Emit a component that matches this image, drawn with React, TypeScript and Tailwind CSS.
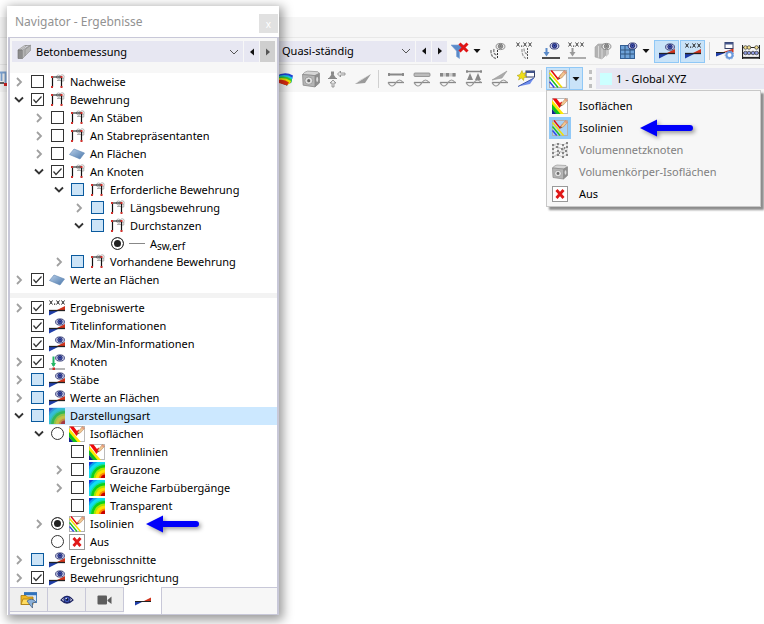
import { useState, type ReactNode } from 'react'
import clsx from 'clsx'

type IconProps = { className?: string }

function Svg({ children, className, size = 16 }: IconProps & { children: ReactNode; size?: number }) {
  return (
    <svg viewBox={`0 0 ${size} ${size}`} width={size} height={size} className={clsx('shrink-0', className)} aria-hidden="true">
      {children}
    </svg>
  )
}

/* ---------- small parts shared by several icons ---------- */

function EyeShape({ gray = false }: { gray?: boolean }) {
  const ring = gray ? '#777' : '#1b2262'
  return (
    <g>
      <ellipse cx="5" cy="3.5" rx="4.4" ry="3.1" fill={gray ? '#eee' : '#c9cdec'} stroke={ring} strokeWidth="0.8" />
      <circle cx="5" cy="3.3" r="2.2" fill={gray ? '#999' : '#4a5ec4'} stroke={ring} strokeWidth="0.9" />
      <circle cx="5" cy="3.2" r="0.9" fill={ring} />
    </g>
  )
}

function WedgeShape() {
  return (
    <g>
      <path d="M0 10.5 H10 L0 15.5 Z" fill="#1f3ea8" />
      <path d="M16 6 V11 H6 Z" fill="#d0341c" />
      <path d="M0 10.5 H16" stroke="#222" strokeWidth="1.3" />
    </g>
  )
}

function DotsShape({ color = '#222' }: { color?: string }) {
  return (
    <g stroke={color} strokeWidth="1" fill="none">
      <path d="M0.5 0.5 L3.5 4.5 M3.5 0.5 L0.5 4.5 M7.5 0.5 L10.5 4.5 M10.5 0.5 L7.5 4.5 M12.5 0.5 L15.5 4.5 M15.5 0.5 L12.5 4.5" />
      <path d="M5 4.2 H6.2" strokeWidth="1.3" />
    </g>
  )
}

function PencilShape() {
  return (
    <g>
      <path d="M8.5 8 L9.3 5.5 L13.5 0.5 L15.6 2.2 L11.2 7.1 Z" fill="#f3c791" stroke="#a97a4c" strokeWidth="0.5" />
      <path d="M12.4 1.8 L13.5 0.5 L15.6 2.2 L14.5 3.5 Z" fill="#e59a80" />
      <path d="M8.500 8 L8.900 6.700 L9.900 7.500 Z" fill="#222" />
    </g>
  )
}

/* ---------- tree icons ---------- */

function FrameIcon() {
  return (
    <Svg>
      <g fill="none" stroke="#a8a8a8" strokeWidth="0.9">
        <circle cx="9.5" cy="3" r="2" />
        <circle cx="13.2" cy="2.8" r="2" />
        <path d="M8 6.5 H12.5 M14.8 4 V7 H12.5 M10 6.5 V2" />
      </g>
      <path d="M3 3 H13 M3.5 3 V13 M12.5 3 V13" fill="none" stroke="#111" strokeWidth="1.2" />
      <path d="M2 2h2v2h-2zM11.5 2h2v2h-2zM2 12h2v2h-2zM11.5 12h2v2h-2z" fill="#d0302c" />
    </Svg>
  )
}

function SurfaceIcon() {
  return (
    <Svg>
      <defs>
        <linearGradient id="surface" x1="0" y1="0" x2="1" y2="1">
          <stop offset="0" stopColor="#b9cfe8" />
          <stop offset="1" stopColor="#4a77ab" />
        </linearGradient>
      </defs>
      <path d="M5 3 L15.5 7 L11 13 L0.5 8.5 Z" fill="url(#surface)" stroke="#5f86b3" strokeWidth="0.6" />
    </Svg>
  )
}

function LineIcon() {
  return (
    <Svg>
      <path d="M0 7.5 H16" stroke="#888" />
    </Svg>
  )
}

function ValuesIcon() {
  return (
    <Svg>
      <DotsShape />
      <WedgeShape />
    </Svg>
  )
}

function ResultEyeIcon() {
  return (
    <Svg>
      <WedgeShape />
      <g transform="translate(6 0.5)">
        <EyeShape />
      </g>
    </Svg>
  )
}

function NodeEyeIcon() {
  return (
    <Svg>
      <path d="M0 15 H16" stroke="#999" strokeWidth="1.4" />
      <path d="M4.5 2.5 V12" stroke="#22b765" strokeWidth="2" />
      <path d="M2 9 H7 L4.5 13 Z" fill="#22b765" />
      <rect x="3.5" y="13.5" width="2.5" height="2.5" fill="#c9302c" />
      <g transform="translate(6 0.5)">
        <EyeShape />
      </g>
    </Svg>
  )
}

function GradientIcon({ dim = false }: { dim?: boolean }) {
  return (
    <Svg>
      <rect width="16" height="16" fill="#1238d8" />
      <circle cx="16" cy="17" r="20.500" fill="#0a9cf0" />
      <circle cx="16" cy="17" r="18.500" fill="#10dcf5" />
      <circle cx="16" cy="17" r="15.500" fill="#10e0a0" />
      <circle cx="16" cy="17" r="14" fill="#10d01c" />
      <circle cx="16" cy="17" r="11.500" fill="#a8e800" />
      <circle cx="16" cy="17" r="9.500" fill="#ffe000" />
      <circle cx="16" cy="17" r="6.500" fill="#ff8a00" />
      <circle cx="16" cy="17" r="4.500" fill="#c80000" />
      {dim && <rect width="16" height="16" fill="#6b8fae" opacity="0.4" />}
    </Svg>
  )
}

function IsoAreasIcon() {
  return (
    <Svg>
      <rect x="0.5" y="0.5" width="15" height="15" fill="#fff" stroke="#bbb" />
      <path d="M0 2 L12 16 H8 L0 6.500 Z" fill="#ffe600" />
      <path d="M0 6 L8.500 16 H4 L0 11 Z" fill="#10c01c" />
      <path d="M0 11 L4.200 16 H0 Z" fill="#10248c" />
      <path d="M0.500 0.500 H4.500 L8 5 L9.500 3.500 L10.500 6 L7.500 10 Z" fill="#ee0a0a" />
      <PencilShape />
    </Svg>
  )
}

function IsoLinesIcon({ active = false, size = 16 }: { active?: boolean; size?: number }) {
  return (
    <svg viewBox="0 0 16 16" width={size} height={size} className="shrink-0" aria-hidden="true">
      <rect x="0.5" y="0.5" width="15" height="15" fill={active ? '#a9d1f5' : '#fff'} stroke="#b0b0b0" />
      <path d="M2 0.500 L8 8 L11 4.500" fill="none" stroke="#e00d0d" strokeWidth="1.400" />
      <path d="M0.500 2.500 L11.500 15.500" stroke="#f2e000" strokeWidth="1.500" />
      <path d="M0.500 6.500 L8 15.500" stroke="#18c01c" strokeWidth="1.300" />
      <path d="M0.500 10.500 L4.700 15.500" stroke="#2b45e8" strokeWidth="1.300" />
      <PencilShape />
    </svg>
  )
}

function OffIcon() {
  return (
    <Svg>
      <rect x="0.5" y="0.5" width="15" height="15" fill="#fff" stroke="#999" />
      <path d="M4.500 4 L11.500 12 M11.500 4 L4.500 12" stroke="#e01818" strokeWidth="2.800" />
    </Svg>
  )
}

function MeshNodesIcon() {
  return (
    <Svg>
      <path
        d="M1 3 L6 1.500 L11 3 L15 1 M1 7 L5 5 L10 7 L15 5 M1 11 L6 9 L11 11 L15 9 M1 15 L6 13 L11 15 L15 12 M1 3 V15 M6 1.500 V13 M11 3 V15 M15 1 V12 M1 3 L15 9 M1 15 L15 5"
        fill="none"
        stroke="#b5b5b5"
        strokeWidth="0.7"
      />
      <path
        d="M0 2h2v2h-2zM5 1h2v2h-2zM10 2h2v2h-2zM14 0h2v2h-2zM0 6h2v2h-2zM4 4h2v2h-2zM9 6h2v2h-2zM14 4h2v2h-2zM0 10h2v2h-2zM5 8h2v2h-2zM10 10h2v2h-2zM13 8h2v2h-2zM0 14h2v2h-2zM5 12h2v2h-2zM10 14h2v2h-2zM14 12h2v2h-2zM7 10h1v2h-1zM12 5h1v2h-1z"
        fill="#858585"
      />
    </Svg>
  )
}

function SolidIcon({ size = 16 }: { size?: number }) {
  return (
    <svg viewBox="0 0 16 16" width={size} height={size} className="shrink-0" aria-hidden="true">
      <path d="M0.500 4 Q2 1.500 5 1 L14 1.500 L15.500 3 L11.500 5 Z" fill="#d6d6d6" stroke="#999" strokeWidth="0.7" />
      <path d="M11.500 5 L15.500 3 V11.500 L11.500 15 Z" fill="#8f8f8f" stroke="#888" strokeWidth="0.7" />
      <path d="M0.500 4 L11.500 5 V15 L1 13.500 Z" fill="#b5b5b5" stroke="#888" strokeWidth="0.7" />
      <ellipse cx="6" cy="9.500" rx="3.500" ry="3.300" fill="#e2e2e2" stroke="#999" strokeWidth="0.8" />
      <circle cx="6" cy="9.500" r="1.400" fill="#6d6d6d" />
      <ellipse cx="13.500" cy="8.500" rx="0.9" ry="2.200" fill="#ddd" />
    </svg>
  )
}

function BeamIcon() {
  return (
    <Svg>
      <path d="M2 6 L8.500 1.500 H11 L5 6 Z" fill="#c9c9c9" stroke="#8d8d8d" strokeWidth="0.6" />
      <path d="M2 6 H6.500 V14.500 H2 Z" fill="#8d8d8d" stroke="#6d6d6d" strokeWidth="0.6" />
      <path d="M6.500 6 L14.500 1 V6.500 L6.500 14.500 Z" fill="#b5b5b5" stroke="#8d8d8d" strokeWidth="0.6" />
      <path d="M9 1.500 H14.500 L9 5.500 V12" fill="none" stroke="#909090" strokeWidth="0.8" />
    </Svg>
  )
}

/* ---------- toolbar icons, 18px ---------- */

function FilterOffIcon() {
  return (
    <Svg size={18}>
      <path d="M0 3 H13 L8.500 9 V16.500 L5.500 14.500 V9 Z" fill="#5b8bc9" stroke="#7ea5d6" strokeWidth="0.6" />
      <path d="M8.500 1.500 L16.500 9.500 M16.500 1.500 L8.500 9.500" stroke="#e01414" strokeWidth="3" />
    </Svg>
  )
}

function StirrupEyeIcon() {
  return (
    <Svg size={18}>
      <path d="M1 8 Q0.500 15 6 16.500 M4 7 Q3 12 6.500 13" fill="none" stroke="#777" strokeWidth="1.300" strokeDasharray="3 1" />
      <path d="M7.500 5 V17" stroke="#333" strokeDasharray="2 1" />
      <g transform="translate(5.500 1)"><EyeShape gray /></g>
    </Svg>
  )
}

function StirrupValueIcon() {
  return (
    <Svg size={18}>
      <DotsShape color="#444" />
      <path d="M6 7 Q5.500 14 10 16.500 M8 6.500 Q8 11 11 12" fill="none" stroke="#999" strokeWidth="1.200" strokeDasharray="3 1" />
      <path d="M11.500 6 V17" stroke="#555" strokeDasharray="2 1" />
    </Svg>
  )
}

function LoadIcon({ gray = false }: { gray?: boolean }) {
  return (
    <Svg size={18}>
      {gray ? <DotsShape color="#444" /> : <g transform="translate(7.500 0.500)"><EyeShape /></g>}
      <path d="M4.500 6 V11" stroke={gray ? '#999' : '#5b8bc9'} strokeWidth="2" />
      <path d="M1.500 10 H7.500 L4.500 14.500 Z" fill={gray ? '#999' : '#5b8bc9'} />
      <path d="M0 16 H18" stroke={gray ? '#999' : '#222'} strokeWidth="1.600" />
    </Svg>
  )
}

function BoxEyeIcon() {
  return (
    <Svg size={18}>
      <path d="M1 5 L4 2 H12 V13 L8 17 L1 15 Z" fill="#b2b2b2" stroke="#a5a5a5" strokeWidth="0.6" />
      <path d="M4.500 4 V15.500 M8 6 V17" stroke="#d8d8d8" />
      <path d="M12 5 L15 4 V12 L12 15 Z" fill="#cacaca" />
      <g transform="translate(7.500 1)"><EyeShape gray /></g>
    </Svg>
  )
}

function GridEyeIcon() {
  return (
    <Svg size={18}>
      <rect x="0.5" y="3.500" width="14" height="13" fill="#6ea2d8" stroke="#335f95" />
      <path d="M5 4 V16 M10 4 V16 M1 8 H14 M1 12 H14" stroke="#31547d" />
      <g transform="translate(7.500 0.500)"><EyeShape /></g>
    </Svg>
  )
}

function ResultSettingsIcon() {
  return (
    <Svg size={18}>
      <rect x="9" y="0.500" width="8" height="6" fill="#fff" stroke="#333f66" />
      <path d="M9 1.500 H17" stroke="#44568c" strokeWidth="2" />
      <path d="M0 11 H9 L0 14.500 Z" fill="#1f3ea8" />
      <path d="M17.500 6.500 V10.500 H6 Z" fill="#d0341c" />
      <path d="M0 10.500 H9" stroke="#222" />
      <circle cx="13.500" cy="13" r="3" fill="#fff" stroke="#6d9bdd" strokeWidth="2" />
      <circle cx="13.500" cy="13" r="4.300" fill="none" stroke="#6d9bdd" strokeDasharray="1.500 1.500" />
    </Svg>
  )
}

function AbacusIcon() {
  return (
    <Svg size={18}>
      <path d="M0.500 3 V17 M17.500 3 V17 M0 5.500 H18 M0 11 H18" stroke="#222" strokeWidth="1.200" />
      <path d="M0 15.800 H18" stroke="#222" strokeWidth="1.800" />
      <g stroke="#333" strokeWidth="0.7">
        <g fill="#f3df90">
          <circle cx="3.500" cy="5.500" r="1.800" /><circle cx="7" cy="5.500" r="1.800" /><circle cx="14.500" cy="5.500" r="1.800" />
        </g>
        <g fill="#8f9be0">
          <circle cx="3.500" cy="11" r="1.800" /><circle cx="7" cy="11" r="1.800" /><circle cx="11" cy="11" r="1.800" /><circle cx="14.500" cy="11" r="1.800" />
        </g>
      </g>
    </Svg>
  )
}

function RainbowIcon() {
  return (
    <Svg size={18}>
      <path d="M0 6 Q9 1 17 5.500 L15 13 Q12 13 11 15.500 L0 11 Z" fill="#2143d8" />
      <path d="M0 7 Q9 3 16.500 7.500 L15 13 Q12 12.500 11 15.500 L0 11 Z" fill="#19c7e5" />
      <path d="M0 8 Q9 4.500 16 9.500 L15 13 Q12 12 11 15.500 L0 11 Z" fill="#38cf30" />
      <path d="M0 9 Q8 6.500 15 11 L14 13.500 L11 15 L0 11 Z" fill="#f6e400" />
      <path d="M0 10.500 Q8 8.500 13 12.500 L11 15.500 L3 13 Z" fill="#e52c12" />
    </Svg>
  )
}

function SupportIcon() {
  return (
    <Svg size={18}>
      <path d="M1 8 L4.500 3 L8 8 Z M3 1.500 h3 v3 h-3 z" fill="#8b8b8b" />
      <path d="M0 8.500 H9" stroke="#888" />
      <path d="M9.500 4 L12.500 1 V3 H17 V5 H12.500 V7 Z" fill="#e5e5e5" stroke="#888" strokeWidth="0.8" />
      <path d="M5 10 L8 13 H6 V17 H4 V13 H2 Z" fill="#e5e5e5" stroke="#888" strokeWidth="0.8" />
    </Svg>
  )
}

function GrayWedgeIcon() {
  return (
    <Svg size={18}>
      <path d="M1 14 L17 4 L11 13 Z" fill="#9b9b9b" />
      <path d="M1 14 L17 4 L6 10 Z" fill="#cecece" />
    </Svg>
  )
}

function DiagramIcon({ variant }: { variant: 'line' | 'bar' | 'dots' | 'frame' | 'wedge' }) {
  return (
    <Svg size={18}>
      {variant === 'line' && <path d="M1 4.500 H17 M2 3 V6 M16 3 V6" stroke="#888" strokeWidth="1.800" />}
      {variant === 'bar' && <rect x="1" y="3" width="16" height="3.500" rx="1" fill="#bcbcbc" stroke="#888" strokeWidth="0.8" />}
      {variant === 'dots' && (
        <>
          <rect x="1" y="3" width="16" height="3.500" rx="1" fill="#ccc" />
          <path d="M1 3h3v3.500h-3zM7 3h3v3.500h-3zM13.500 3h3v3.500h-3z" fill="#888" />
        </>
      )}
      {variant === 'frame' && (
        <>
          <path d="M1 1.500 H17 M2 0 V3 M16 0 V3" stroke="#888" strokeWidth="1.300" />
          <path d="M5 3 L8 10 H2 Z M13 3 L16 10 H10 Z" fill="#888" />
        </>
      )}
      {variant === 'wedge' && <path d="M1 10 L16 1 L11 8 Z" fill="#aaa" stroke="#999" strokeWidth="0.6" />}
      <path d="M1 12.500 H17" stroke="#888" strokeWidth="1.300" />
      <path d="M1 12.500 Q5 19.500 9 12.500 Q12.500 7.500 16 12.500" fill="none" stroke="#999" strokeWidth="1.200" />
    </Svg>
  )
}

function NewResultIcon() {
  return (
    <Svg size={18}>
      <rect x="9" y="1" width="8.500" height="6" fill="#fff" stroke="#333f66" />
      <path d="M9 2 H17.500" stroke="#44568c" strokeWidth="2" />
      <path d="M5 0.500 L6 3.500 L9 2.500 L7.500 5.500 L10 7 L7 7.500 L6.500 10.500 L4.500 8 L1.500 10 L2.500 7 L0 5.500 L3 4.500 Z" fill="#f0df15" stroke="#a99a10" strokeWidth="0.5" />
      <path d="M1 16.500 L17 8 L13 14 Z" fill="#6e8dec" />
      <path d="M1 16.500 L17 8" stroke="#3c55ad" />
    </Svg>
  )
}

function ModelIcon() {
  return (
    <svg viewBox="10 0 8 16" width="8" height="16" className="shrink-0" aria-hidden="true">
      <path d="M9 1.500 H15.500 V12 M11.500 2 V10" fill="none" stroke="#7ea5d6" strokeWidth="1.800" />
      <path d="M10 12 H14" stroke="#333" strokeWidth="1.500" />
      <rect x="14" y="12" width="3" height="3" fill="#d22" />
    </svg>
  )
}

/* ---------- tab icons ---------- */

function ProjectTabIcon() {
  return (
    <Svg size={18}>
      <rect x="4.500" y="1.500" width="12" height="10" fill="#dce8f5" stroke="#4d82bd" />
      <path d="M4 3 H17" stroke="#2f72bd" strokeWidth="2.500" />
      <path d="M1 4.500 H6 L7.500 6 H13 V13.500 H1 Z" fill="#f1b820" stroke="#a97a10" strokeWidth="0.8" />
      <path d="M3 8 H13 L11 13.500 H1 Z" fill="#ffdc60" stroke="#a97a10" strokeWidth="0.8" />
      <path d="M7 10 Q12 6 16 11 L12.500 12 V17 L10 14 Z" fill="#8bb0d8" stroke="#41597a" strokeWidth="0.7" />
    </Svg>
  )
}

function EyeTabIcon() {
  return (
    <Svg>
      <path d="M2 8 Q8 0.500 14 8 Q8 14 2 8 Z" fill="#fff" stroke="#1b2262" strokeWidth="1.200" />
      <circle cx="8" cy="7.500" r="3.200" fill="#4259bd" stroke="#1b2262" />
      <circle cx="8" cy="7.500" r="1.300" fill="#0b1030" />
      <circle cx="7.200" cy="6.500" r="0.7" fill="#fff" />
    </Svg>
  )
}

function CameraTabIcon() {
  return (
    <Svg>
      <rect x="0.5" y="3.5" width="9.500" height="9" rx="1" fill="#5d5d5d" />
      <path d="M10.500 8 L14.500 4.500 V12 L10.500 9 Z" fill="#5d5d5d" />
    </Svg>
  )
}

function ResultTabIcon() {
  return (
    <Svg>
      <path d="M0 8 H9 L0 12.500 Z" fill="#1f3ea8" />
      <path d="M16 4.500 V9 H7 Z" fill="#d0341c" />
      <path d="M0 8.500 H16" stroke="#222" />
    </Svg>
  )
}

/* ---------- controls ---------- */

function Chevron({ open = false }: { open?: boolean }) {
  return (
    <svg viewBox="0 0 10 10" width="10" height="10" aria-hidden="true">
      {open ? (
        <path d="M1 2.500 L5 6.500 L9 2.500" fill="none" stroke="#333" strokeWidth="1.800" />
      ) : (
        <path d="M3 1 L7 5 L3 9" fill="none" stroke="#a0a0a0" strokeWidth="1.800" />
      )}
    </svg>
  )
}

function Triangle({ dir, muted = false }: { dir: 'left' | 'right' | 'down'; muted?: boolean }) {
  const d = { left: 'M6 0.500 V7.500 L2 4 Z', right: 'M2 0.500 V7.500 L6 4 Z', down: 'M0.500 2 H7.500 L4 6 Z' }[dir]
  return (
    <svg viewBox="0 0 8 8" width="8" height="8" className="shrink-0" aria-hidden="true">
      <path d={d} fill={muted ? '#555' : '#111'} />
    </svg>
  )
}

function Combo({ label, value, icon, className }: { label: string; value: string; icon?: ReactNode; className?: string }) {
  return (
    <div className={clsx('flex min-w-0 items-center bg-[#e7e7f2]', className)}>
      {icon}
      <select aria-label={label} className="h-full min-w-0 flex-1 appearance-none bg-transparent text-[11px] outline-none">
        <option>{value}</option>
      </select>
      <svg viewBox="0 0 10 10" width="10" height="10" className="mr-1 shrink-0" aria-hidden="true">
        <path d="M1 3 L5 7 L9 3" fill="none" stroke="#555" />
      </svg>
    </div>
  )
}

function BlueArrow({ className }: IconProps) {
  return (
    <svg viewBox="0 0 56 22" width="56" height="22" className={clsx('shrink-0 drop-shadow-[2px_2px_2px_rgba(0,0,0,0.4)]', className)} aria-hidden="true">
      <path d="M1 11 L18 2.500 V8 H51 Q54 8 54 11 Q54 14 51 14 H18 V19.500 Z" fill="#0000fa" />
    </svg>
  )
}

type CheckState = 'on' | 'off' | 'partial'

type TreeItem = {
  id: string
  label: ReactNode
  level: number
  expand?: 'open' | 'closed'
  control: 'check' | 'radio'
  state: CheckState
  icon: ReactNode
  group?: string
  selected?: boolean
  marked?: boolean
}

const RESULT_ITEMS: TreeItem[] = [
  { id: 'nachweise', label: 'Nachweise', level: 0, expand: 'closed', control: 'check', state: 'off', icon: <FrameIcon /> },
  { id: 'bewehrung', label: 'Bewehrung', level: 0, expand: 'open', control: 'check', state: 'on', icon: <FrameIcon /> },
  { id: 'an-staeben', label: 'An Stäben', level: 1, expand: 'closed', control: 'check', state: 'off', icon: <FrameIcon /> },
  { id: 'an-stabrep', label: 'An Stabrepräsentanten', level: 1, expand: 'closed', control: 'check', state: 'off', icon: <FrameIcon /> },
  { id: 'an-flaechen', label: 'An Flächen', level: 1, expand: 'closed', control: 'check', state: 'off', icon: <SurfaceIcon /> },
  { id: 'an-knoten', label: 'An Knoten', level: 1, expand: 'open', control: 'check', state: 'on', icon: <FrameIcon /> },
  { id: 'erforderlich', label: 'Erforderliche Bewehrung', level: 2, expand: 'open', control: 'check', state: 'partial', icon: <FrameIcon /> },
  { id: 'laengs', label: 'Längsbewehrung', level: 3, expand: 'closed', control: 'check', state: 'partial', icon: <FrameIcon /> },
  { id: 'durchstanzen', label: 'Durchstanzen', level: 3, expand: 'open', control: 'check', state: 'partial', icon: <FrameIcon /> },
  {
    id: 'asw-erf',
    label: (
      <>
        A<span className="align-[-2px] text-[10px] leading-none">sw,erf</span>
      </>
    ),
    level: 4,
    control: 'radio',
    state: 'on',
    group: 'durchstanzen',
    icon: <LineIcon />,
  },
  { id: 'vorhanden', label: 'Vorhandene Bewehrung', level: 2, expand: 'closed', control: 'check', state: 'partial', icon: <FrameIcon /> },
  { id: 'werte-flaechen', label: 'Werte an Flächen', level: 0, expand: 'closed', control: 'check', state: 'on', icon: <SurfaceIcon /> },
]

const DISPLAY_ITEMS: TreeItem[] = [
  { id: 'ergebniswerte', label: 'Ergebniswerte', level: 0, expand: 'closed', control: 'check', state: 'on', icon: <ValuesIcon /> },
  { id: 'titel', label: 'Titelinformationen', level: 0, control: 'check', state: 'on', icon: <ResultEyeIcon /> },
  { id: 'maxmin', label: 'Max/Min-Informationen', level: 0, control: 'check', state: 'on', icon: <ResultEyeIcon /> },
  { id: 'knoten', label: 'Knoten', level: 0, expand: 'closed', control: 'check', state: 'on', icon: <NodeEyeIcon /> },
  { id: 'staebe', label: 'Stäbe', level: 0, expand: 'closed', control: 'check', state: 'partial', icon: <ResultEyeIcon /> },
  { id: 'werte', label: 'Werte an Flächen', level: 0, expand: 'closed', control: 'check', state: 'partial', icon: <ResultEyeIcon /> },
  { id: 'darstellungsart', label: 'Darstellungsart', level: 0, expand: 'open', control: 'check', state: 'partial', icon: <GradientIcon dim />, selected: true },
  { id: 'isoflaechen', label: 'Isoflächen', level: 1, expand: 'open', control: 'radio', state: 'off', group: 'darstellung', icon: <IsoAreasIcon /> },
  { id: 'trennlinien', label: 'Trennlinien', level: 2, control: 'check', state: 'off', icon: <IsoAreasIcon /> },
  { id: 'grauzone', label: 'Grauzone', level: 2, expand: 'closed', control: 'check', state: 'off', icon: <GradientIcon /> },
  { id: 'weich', label: 'Weiche Farbübergänge', level: 2, expand: 'closed', control: 'check', state: 'off', icon: <GradientIcon /> },
  { id: 'transparent', label: 'Transparent', level: 2, control: 'check', state: 'off', icon: <GradientIcon /> },
  { id: 'isolinien', label: 'Isolinien', level: 1, expand: 'closed', control: 'radio', state: 'on', group: 'darstellung', icon: <IsoLinesIcon />, marked: true },
  { id: 'aus', label: 'Aus', level: 1, control: 'radio', state: 'off', group: 'darstellung', icon: <OffIcon /> },
  { id: 'schnitte', label: 'Ergebnisschnitte', level: 0, expand: 'closed', control: 'check', state: 'partial', icon: <ResultEyeIcon /> },
  { id: 'richtung', label: 'Bewehrungsrichtung', level: 0, expand: 'closed', control: 'check', state: 'on', icon: <ResultEyeIcon /> },
]

const INDENT = ['pl-1', 'pl-6', 'pl-11', 'pl-16', 'pl-21']

function CheckBox({ id, state }: { id: string; state: CheckState }) {
  const [value, setValue] = useState(state)

  return (
    <span className="mb-px grid size-[13px] shrink-0">
      <input
        id={id}
        type="checkbox"
        checked={value === 'on'}
        onChange={() => setValue(value === 'on' ? 'off' : 'on')}
        className={clsx(
          'col-start-1 row-start-1 size-[13px] appearance-none border',
          value === 'partial' ? 'border-[#0a5a9e] bg-[#cce4f7]' : 'border-[#333] bg-white'
        )}
      />
      {value === 'on' && (
        <svg viewBox="0 0 13 13" className="pointer-events-none col-start-1 row-start-1 size-[13px]" aria-hidden="true">
          <path d="M2.500 6.500 L5 9.500 L10.500 3.500" fill="none" stroke="#333" strokeWidth="1.200" />
        </svg>
      )}
    </span>
  )
}

function TreeRow({ item }: { item: TreeItem }) {
  return (
    <li className={clsx('flex h-[18px] items-center', INDENT[item.level])}>
      <span className="flex w-[17px] shrink-0 items-center">
        {item.expand && (
          <button type="button" aria-label={item.expand === 'open' ? 'Zuklappen' : 'Aufklappen'}>
            <Chevron open={item.expand === 'open'} />
          </button>
        )}
      </span>
      {item.control === 'check' ? (
        <CheckBox id={item.id} state={item.state} />
      ) : (
        <input
          id={item.id}
          type="radio"
          name={item.group}
          defaultChecked={item.state === 'on'}
          className="mb-px size-[13px] shrink-0 appearance-none rounded-full border border-[#333] bg-white checked:bg-[#222] checked:shadow-[inset_0_0_0_2px_white]"
        />
      )}
      <label
        htmlFor={item.id}
        className={clsx('ml-[5px] flex h-full flex-1 items-center gap-[5px] whitespace-nowrap', item.selected && 'bg-[#cce8ff]')}
      >
        {item.icon}
        <span>{item.label}</span>
        {item.marked && <BlueArrow className="ml-1.5" />}
      </label>
    </li>
  )
}

function Tree({ items }: { items: TreeItem[] }) {
  return (
    <ul>
      {items.map((item) => (
        <TreeRow key={item.id} item={item} />
      ))}
    </ul>
  )
}

const TABS = [
  { name: 'Daten', icon: <ProjectTabIcon /> },
  { name: 'Zeigen', icon: <EyeTabIcon /> },
  { name: 'Ansichten', icon: <CameraTabIcon /> },
  { name: 'Ergebnisse', icon: <ResultTabIcon /> },
]

function Navigator() {
  return (
    <aside className="absolute left-[7px] top-1.5 w-[272px] bg-white shadow-[2px_3px_10px_2px_rgba(0,0,0,0.4)]">
      <header className="flex h-[31px] items-center justify-between pl-2">
        <h1 className="text-[12px] text-[#929292]">Navigator - Ergebnisse</h1>
        <button type="button" aria-label="Schließen" className="mt-1 mr-px size-[19px] bg-[#e1e1e1] text-[10px] leading-none text-white">
          x
        </button>
      </header>

      <div className="ml-px border-x-2 border-t border-[#c8c8d8]">
        <div className="flex h-[35px] gap-px bg-[#f7f7f7] pt-[3px] pr-0.5 pl-0.5">
          <Combo label="Bemessung" value="Betonbemessung" icon={<span className="mx-1"><BeamIcon /></span>} className="h-[21px] flex-1" />
          <button type="button" aria-label="Zurück" className="flex h-[21px] w-[15px] items-center justify-center bg-[#e7e7f2]">
            <Triangle dir="left" />
          </button>
          <button type="button" aria-label="Vor" className="flex h-[21px] w-[15px] items-center justify-center bg-[#cfcfcf]">
            <Triangle dir="right" muted />
          </button>
        </div>
        <Tree items={RESULT_ITEMS} />
        <div className="mt-1 mb-px h-[5px] bg-[#f3f3f3]" />
        <Tree items={DISPLAY_ITEMS} />
      </div>

      <nav className="ml-px flex h-[28px] border-x-2 border-b border-[#c8c8d8] bg-[#f7f7f7]" role="tablist">
        {TABS.map((tab, i) => (
          <button
            key={tab.name}
            type="button"
            role="tab"
            aria-label={tab.name}
            aria-selected={i === 3}
            className={clsx(
              'flex w-[38px] items-center justify-center border-r border-[#c8c8d8]',
              i === 3 ? 'bg-white' : 'mb-0.5 border-y bg-[#efefef]'
            )}
          >
            {tab.icon}
          </button>
        ))}
        <span className="flex-1 border-t border-[#c8c8d8]" />
      </nav>
    </aside>
  )
}

function ToolButton({ name, active = false, children }: { name: string; active?: boolean; children: ReactNode }) {
  return (
    <button
      type="button"
      aria-label={name}
      className={clsx(
        'flex shrink-0 items-center justify-center',
        active ? 'h-[23px] w-[25px] border border-[#90c8f6] bg-[#c9e3f8]' : 'size-[18px]'
      )}
    >
      {children}
    </button>
  )
}

function Separator() {
  return <span className="block h-[18px] w-px shrink-0 bg-[#d0d0d0]" />
}

const MENU = [
  { label: 'Isoflächen', icon: <IsoAreasIcon /> },
  { label: 'Isolinien', icon: <IsoLinesIcon active />, active: true },
  { label: 'Volumennetzknoten', icon: <MeshNodesIcon />, disabled: true },
  { label: 'Volumenkörper-Isoflächen', icon: <SolidIcon />, disabled: true },
  { label: 'Aus', icon: <OffIcon /> },
]

function DisplayMenu() {
  return (
    <div role="menu" className="absolute top-full -left-px mt-px w-[215px] border border-[#c8c8c8] bg-[#f7f7f7] px-0.5 pt-1 pb-px shadow-[3px_3px_2px_rgba(0,0,0,0.45)]">
      {MENU.map((entry) => (
        <button
          key={entry.label}
          type="button"
          role="menuitem"
          disabled={entry.disabled}
          className="flex h-[22px] w-full items-center text-left disabled:text-[#808080]"
        >
          <span className={clsx('mr-2 flex size-[22px] items-center justify-center', entry.active && 'bg-[#91c9f7]')}>{entry.icon}</span>
          <span className="whitespace-nowrap">{entry.label}</span>
          {entry.active && <BlueArrow className="ml-4" />}
        </button>
      ))}
    </div>
  )
}

function Toolbars() {
  return (
    <div className="pt-[17px]">
      <div className="h-[21px] border-b border-[#e8e8e8] bg-[#f6f6f6]" />

      <div className="flex h-[26px] items-center overflow-hidden bg-[#f7f7f7] pl-[275px]">
        <div className="flex h-[21px] shrink-0 gap-px">
          <Combo label="Bemessungssituation" value="Quasi-ständig" className="w-[140px] pl-[7px]" />
          <button type="button" aria-label="Vorherige" className="flex w-[15px] items-center justify-center bg-[#e7e7f2]">
            <Triangle dir="left" />
          </button>
          <button type="button" aria-label="Nächste" className="flex w-[15px] items-center justify-center bg-[#e7e7f2]">
            <Triangle dir="right" />
          </button>
        </div>
        <div className="ml-1 flex items-center gap-1">
          <ToolButton name="Filter aus"><FilterOffIcon /></ToolButton>
          <Triangle dir="down" />
        </div>
        <div className="ml-[9px] flex items-center gap-2">
          <ToolButton name="Bewehrung anzeigen"><StirrupEyeIcon /></ToolButton>
          <ToolButton name="Bewehrungswerte"><StirrupValueIcon /></ToolButton>
          <ToolButton name="Lasten anzeigen"><LoadIcon /></ToolButton>
          <ToolButton name="Lastwerte"><LoadIcon gray /></ToolButton>
          <ToolButton name="Körper anzeigen"><BoxEyeIcon /></ToolButton>
          <ToolButton name="Netz anzeigen"><GridEyeIcon /></ToolButton>
        </div>
        <div className="ml-1 flex items-center gap-1">
          <Triangle dir="down" />
          <div className="flex gap-px">
            <ToolButton name="Ergebnisse anzeigen" active><ResultEyeIcon /></ToolButton>
            <ToolButton name="Ergebniswerte anzeigen" active><ValuesIcon /></ToolButton>
          </div>
          <Separator />
        </div>
        <div className="ml-1.5 flex items-center gap-2">
          <ToolButton name="Ergebnis-Einstellungen"><ResultSettingsIcon /></ToolButton>
          <ToolButton name="Rechner"><AbacusIcon /></ToolButton>
        </div>
      </div>

      <div className="flex h-7 items-center border-t border-[#e8e8e8] bg-[#f7f7f7]">
        <ModelIcon />
        <div className="ml-[268px] flex shrink-0 items-center gap-2">
          <ToolButton name="Flächenergebnisse"><RainbowIcon /></ToolButton>
          <ToolButton name="Volumenergebnisse"><SolidIcon size={18} /></ToolButton>
          <ToolButton name="Lagerreaktionen"><SupportIcon /></ToolButton>
          <ToolButton name="Schnittgrößen"><GrayWedgeIcon /></ToolButton>
        </div>
        <div className="mr-2 ml-1.5"><Separator /></div>
        <div className="flex shrink-0 items-center gap-2">
          <ToolButton name="Linienverlauf"><DiagramIcon variant="line" /></ToolButton>
          <ToolButton name="Stabverlauf"><DiagramIcon variant="bar" /></ToolButton>
          <ToolButton name="Stabsatzverlauf"><DiagramIcon variant="dots" /></ToolButton>
          <ToolButton name="Lagerverlauf"><DiagramIcon variant="frame" /></ToolButton>
          <ToolButton name="Schnittverlauf"><DiagramIcon variant="wedge" /></ToolButton>
          <ToolButton name="Neuer Ergebnisschnitt"><NewResultIcon /></ToolButton>
        </div>
        <div className="ml-1.5"><Separator /></div>
        <div className="relative ml-1 flex h-[23px] w-[37px] shrink-0 border border-[#90c8f6] bg-[#c9e3f8]">
          <button type="button" aria-label="Isolinien" className="flex flex-1 items-center justify-center border-r border-[#90c8f6]">
            <IsoLinesIcon size={18} />
          </button>
          <button type="button" aria-label="Darstellungsart wählen" className="flex w-3 items-center justify-center">
            <Triangle dir="down" />
          </button>
          <DisplayMenu />
        </div>
        <span className="ml-1.5 h-[18px] shrink-0 border-l-3 border-dotted border-[#c0c0c0]" />
        <label className="ml-1 flex h-[21px] min-w-0 flex-1 items-center gap-1 bg-[#e7e7f2] pl-1">
          <span className="size-3 shrink-0 bg-[#ccffff]" />
          <select aria-label="Koordinatensystem" className="min-w-0 flex-1 appearance-none bg-transparent text-[11px] outline-none">
            <option>1 - Global XYZ</option>
          </select>
        </label>
      </div>
    </div>
  )
}

export default function App() {
  return (
    <main className="relative min-h-screen overflow-hidden bg-white font-['Noto_Sans','Open_Sans',sans-serif] text-[11px] leading-4 text-black">
      <Toolbars />
      <Navigator />
    </main>
  )
}
